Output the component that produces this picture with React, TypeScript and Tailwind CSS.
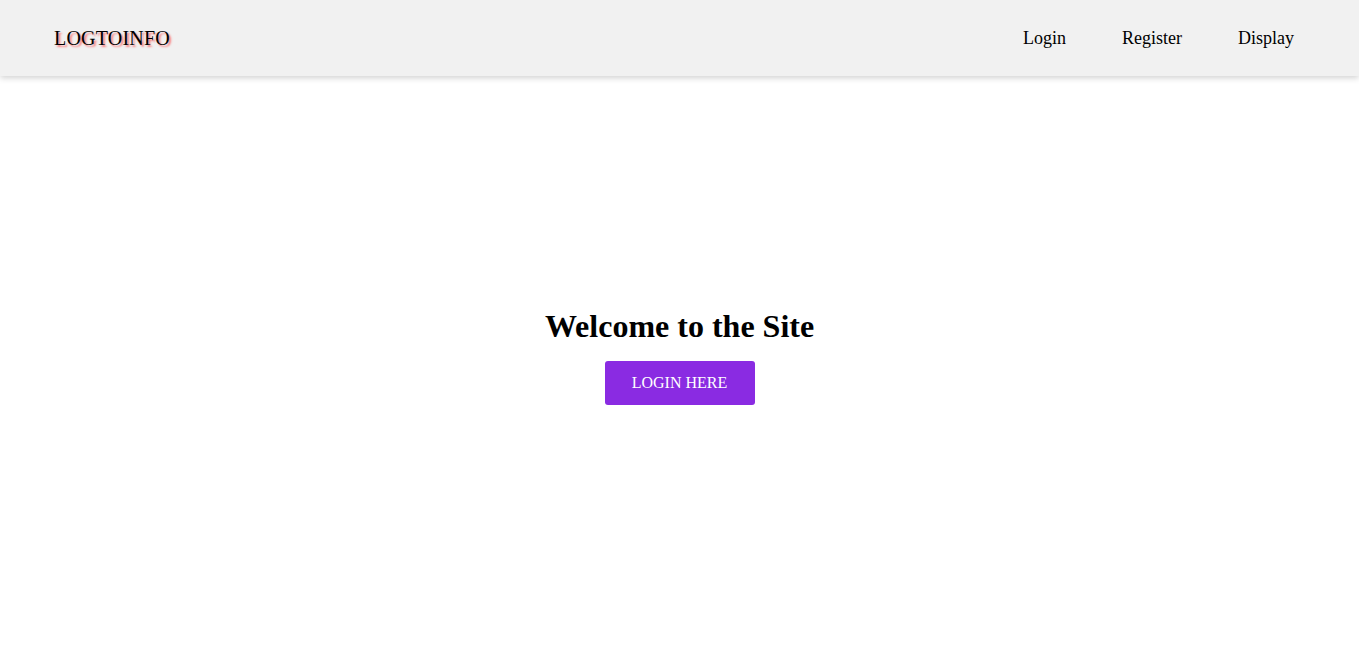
export default function App() {
  return (
    <div className="min-h-screen bg-white font-['Liberation_Serif',serif] text-black">
      {/* Navbar */}
      <nav className="flex h-[76px] items-center justify-between bg-[#f1f1f1] pl-[54px] pr-[65px] shadow-[0_2px_6px_rgba(0,0,0,0.18)]">
        <div className="text-[20px] font-medium tracking-[0.2px] [text-shadow:2px_2px_2px_rgba(255,40,40,0.6)]">LOGTOINFO</div>
        <div className="flex items-center gap-[56px] text-[18px]">
          <a href="#">Login</a>
          <a href="#">Register</a>
          <a href="#">Display</a>
        </div>
      </nav>

      {/* Hero */}
      <main className="flex h-[582px] flex-col items-center justify-center pb-[21px]">
        <h1 className="text-[32px] font-bold leading-[37px]">Welcome to the Site</h1>
        <button className="mt-[16px] h-[44px] w-[150px] rounded-[3px] bg-[#8a2be2] text-[16px] text-white">
          LOGIN HERE
        </button>
      </main>
    </div>
  );
}
